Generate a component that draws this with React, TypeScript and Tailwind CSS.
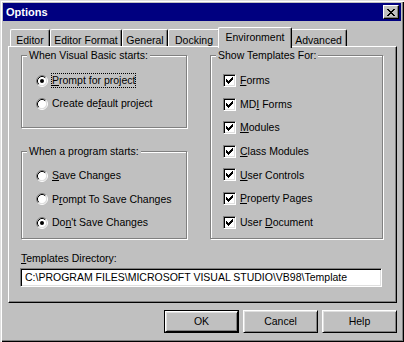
import React from "react";

function Radio({ checked }: { checked?: boolean }) {
  return (
    <svg width="12" height="12" viewBox="0 0 12 12" className="shrink-0">
      <circle cx="6" cy="6" r="4.5" fill="#fff" />
      <path d="M9.89 2.11 A5.5 5.5 0 0 0 2.11 9.89" fill="none" stroke="#808080" strokeWidth="1" />
      <path d="M2.11 9.89 A5.5 5.5 0 0 0 9.89 2.11" fill="none" stroke="#ffffff" strokeWidth="1" />
      <path d="M9.18 2.82 A4.5 4.5 0 0 0 2.82 9.18" fill="none" stroke="#000" strokeWidth="1" />
      <path d="M2.82 9.18 A4.5 4.5 0 0 0 9.18 2.82" fill="none" stroke="#dfdfdf" strokeWidth="1" />
      {checked && <circle cx="6" cy="6" r="2" fill="#000" />}
    </svg>
  );
}

function Check() {
  return (
    <div className="w-[13px] h-[13px] shrink-0 bg-white border border-t-[#808080] border-l-[#808080] border-r-white border-b-white shadow-[inset_1px_1px_0_#000,inset_-1px_-1px_0_#dfdfdf] flex items-center justify-center">
      <svg width="7" height="7" viewBox="0 0 7 7" shapeRendering="crispEdges">
        <polygon points="0,2 2,4 6,0 7,0 7,3 2,7 0,5" fill="#000" />
      </svg>
    </div>
  );
}

function RadioRow({ checked, focus, children }: { checked?: boolean; focus?: boolean; children: React.ReactNode }) {
  return (
    <div className="h-[16px] flex items-center">
      <Radio checked={checked} />
      <span
        className={
          "ml-[3px] px-[0px] py-[1px] border border-dotted " +
          (focus ? "border-black" : "border-transparent")
        }
      >
        {children}
      </span>
    </div>
  );
}

function CheckRow({ children }: { children: React.ReactNode }) {
  return (
    <div className="h-[16px] flex items-center">
      <Check />
      <span className="ml-[4px]">{children}</span>
    </div>
  );
}

const etched =
  "border border-[#808080] shadow-[inset_1px_1px_0_#fff,1px_1px_0_#fff] m-0 p-0 min-w-0";

function Tab({ label, w, selected }: { label: string; w: number; selected?: boolean }) {
  if (selected) {
    return (
      <div
        className="relative z-10 -mx-[2px] -mb-[2px] h-[21px] bg-[#c0c0c0] flex justify-center pt-[4px] border-t border-l border-white border-r border-r-black rounded-t-[2px] shadow-[inset_-1px_0_0_#808080]"
        style={{ width: w + 4 }}
      >
        {label}
      </div>
    );
  }
  return (
    <div
      className="h-[17px] flex justify-center pt-[5px] border-t border-l border-white border-r border-r-black rounded-t-[2px] shadow-[inset_-1px_0_0_#808080]"
      style={{ width: w }}
    >
      {label}
    </div>
  );
}

function Button({ children, def }: { children: React.ReactNode; def?: boolean }) {
  return (
    <div className={"w-[75px] h-[23px] " + (def ? "border border-black" : "")}>
      <div className="w-full h-full flex items-center justify-center border border-t-white border-l-white border-r-black border-b-black shadow-[inset_1px_1px_0_#dfdfdf,inset_-1px_-1px_0_#808080]">
        {children}
      </div>
    </div>
  );
}

export default function App() {
  return (
    <div className="w-[404px] h-[342px] bg-[#c0c0c0] flex flex-col px-[3px] pt-[3px] shadow-[inset_1px_1px_0_#dfdfdf,inset_2px_2px_0_#fff,inset_-1px_-1px_0_#000,inset_-2px_-2px_0_#808080] font-['Liberation_Sans',Arial,sans-serif] text-[10.5px] text-black leading-none">
      {/* Title bar */}
      <div className="h-[18px] bg-[#000080] flex items-center justify-between pl-[3px] pr-[2px]">
        <span className="text-white font-bold text-[11px]">Options</span>
        <div className="w-[16px] h-[14px] bg-[#c0c0c0] flex items-center justify-center border border-t-white border-l-white border-r-black border-b-black shadow-[inset_-1px_-1px_0_#808080]">
          <svg width="8" height="7" viewBox="0 0 8 7" shapeRendering="crispEdges">
            <path d="M0 0h2v1h-2z M6 0h2v1h-2z M1 1h2v1h-2z M5 1h2v1h-2z M2 2h4v1h-4z M3 3h2v1h-2z M2 4h4v1h-4z M1 5h2v1h-2z M5 5h2v1h-2z M0 6h2v1h-2z M6 6h2v1h-2z" fill="#000" />
          </svg>
        </div>
      </div>

      {/* Tabs */}
      <div className="flex items-end h-[19px] mt-[6px] ml-[7px]">
        <Tab label="Editor" w={40} />
        <Tab label="Editor Format" w={72} />
        <Tab label="General" w={46} />
        <Tab label="Docking" w={52} />
        <Tab label="Environment" w={70} selected />
        <Tab label="Advanced" w={57} />
      </div>

      {/* Panel */}
      <div className="ml-[5px] w-[389px] h-[257px] flex flex-col border border-t-white border-l-white border-r-black border-b-black shadow-[inset_-1px_-1px_0_#808080]">
        <div className="flex pl-[12px] pt-[3px]">
          <div className="w-[166px] flex flex-col gap-[18px]">
            <fieldset className={etched + " h-[78px]"}>
              <legend className="ml-[5px] px-[2px] bg-[#c0c0c0]">When Visual Basic starts:</legend>
              <div className="flex flex-col gap-[7px] pl-[14px] pt-[12px]">
                <RadioRow checked focus>
                  <u>P</u>rompt for project
                </RadioRow>
                <RadioRow>
                  Create de<u>f</u>ault project
                </RadioRow>
              </div>
            </fieldset>
            <fieldset className={etched + " h-[93px]"}>
              <legend className="ml-[5px] px-[2px] bg-[#c0c0c0]">When a program starts:</legend>
              <div className="flex flex-col gap-[7.5px] pl-[14px] pt-[11px]">
                <RadioRow>
                  <u>S</u>ave Changes
                </RadioRow>
                <RadioRow>
                  P<u>r</u>ompt To Save Changes
                </RadioRow>
                <RadioRow checked>
                  Do<u>n</u>'t Save Changes
                </RadioRow>
              </div>
            </fieldset>
          </div>
          <fieldset className={etched + " ml-[23px] w-[173px] h-[189px]"}>
            <legend className="ml-[5px] px-[2px] bg-[#c0c0c0]">Show Templates For:</legend>
            <div className="flex flex-col gap-[7.6px] pl-[12px] pt-[12px]">
              <CheckRow>
                <u>F</u>orms
              </CheckRow>
              <CheckRow>
                MD<u>I</u> Forms
              </CheckRow>
              <CheckRow>
                <u>M</u>odules
              </CheckRow>
              <CheckRow>
                <u>C</u>lass Modules
              </CheckRow>
              <CheckRow>
                <u>U</u>ser Controls
              </CheckRow>
              <CheckRow>
                <u>P</u>roperty Pages
              </CheckRow>
              <CheckRow>
                User <u>D</u>ocument
              </CheckRow>
            </div>
          </fieldset>
        </div>

        <div className="mt-[14px] pl-[12px]">
          <u>T</u>emplates Directory:
        </div>
        <div className="mt-[4px] ml-[11px] w-[362px] h-[19px] bg-white flex items-center pl-[4px] border border-t-[#808080] border-l-[#808080] border-r-white border-b-white shadow-[inset_1px_1px_0_#000,inset_-1px_-1px_0_#dfdfdf]">
          C:\PROGRAM FILES\MICROSOFT VISUAL STUDIO\VB98\Template
        </div>
      </div>

      {/* Buttons */}
      <div className="mt-[7px] flex justify-end gap-[4px] pr-[4px]">
        <Button def>OK</Button>
        <Button>Cancel</Button>
        <Button>Help</Button>
      </div>
    </div>
  );
}
